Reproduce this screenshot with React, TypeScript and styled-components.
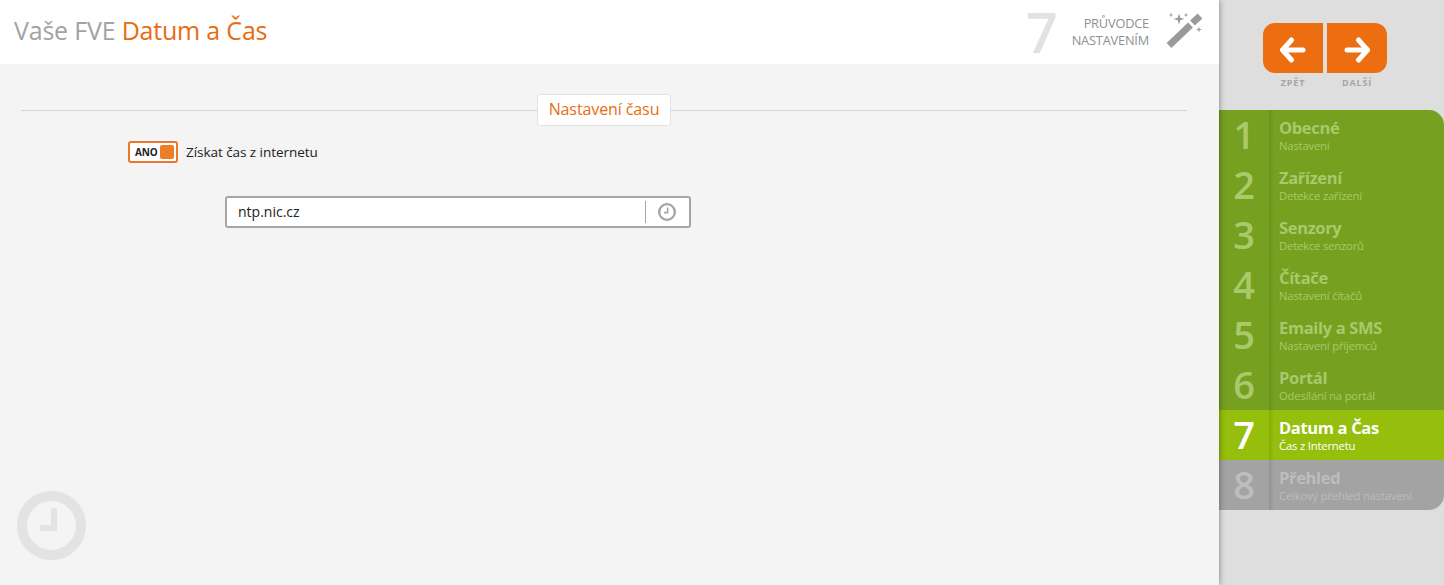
import styled, { createGlobalStyle } from "styled-components"

const GlobalStyle = createGlobalStyle`
  html, body {
    margin: 0;
    padding: 0;
    height: 100%;
    overflow: hidden;
    font-family: "Open Sans", "Noto Sans", sans-serif;
  }
  * {
    box-sizing: border-box;
  }
`

const Style = {
  Page: styled.div`
    display: flex;
    width: 1444px;
    height: 585px;
    background-color: #dedede;
  `,
  Main: styled.main`
    position: relative;
    width: 1219px;
    height: 100%;
    background-color: #f4f4f4;
    box-shadow: 0 0 6px rgba(0, 0, 0, 0.45);
  `,
  Header: styled.header`
    display: flex;
    align-items: center;
    justify-content: space-between;
    height: 64px;
    padding: 0 15px 5px 14px;
    background-color: #fff;
  `,
  Title: styled.h1`
    margin: 0;
    font-size: 25px;
    font-weight: 400;
    letter-spacing: -0.2px;
    color: #a3a3a3;
  `,
  TitleAccent: styled.span`
    color: #e96d10;
  `,
  Wizard: styled.div`
    display: flex;
    align-items: center;
  `,
  WizardNumber: styled.div`
    margin: 3px 14px 0 0;
    font-size: 56px;
    font-weight: 600;
    line-height: 64px;
    color: #e2e2e2;
  `,
  WizardText: styled.div`
    margin: 4px 17px 0 0;
    font-size: 12.8px;
    font-weight: 500;
    line-height: 17px;
    letter-spacing: -0.2px;
    text-align: right;
    text-transform: uppercase;
    color: #8f8f8f;
  `,
  Content: styled.div`
    padding: 30px 32px 0 21px;
  `,
  Legend: styled.div`
    display: flex;
    align-items: center;
    height: 32px;
    &::before,
    &::after {
      content: "";
      flex: 1;
      height: 1px;
      background-color: #d4d4d4;
    }
    &::before {
      flex: 0 0 516px;
    }
  `,
  LegendTag: styled.div`
    width: 134px;
    height: 32px;
    border: 1px solid #e3e3e3;
    border-radius: 3px;
    background-color: #fff;
    font-size: 16px;
    font-weight: 500;
    line-height: 29px;
    text-align: center;
    letter-spacing: -0.1px;
    color: #e96d10;
  `,
  SwitchRow: styled.div`
    display: flex;
    align-items: center;
    gap: 8px;
    margin: 15px 0 0 107px;
  `,
  Switch: styled.div`
    display: flex;
    align-items: center;
    justify-content: space-between;
    width: 50px;
    height: 22px;
    padding: 0 2px 0 5px;
    border: 2px solid #e9782a;
    border-radius: 3px;
    background-color: #fff;
  `,
  SwitchText: styled.span`
    font-size: 10px;
    font-weight: 700;
    letter-spacing: -0.2px;
    color: #222;
  `,
  SwitchKnob: styled.span`
    width: 14px;
    height: 14px;
    border-radius: 2px;
    background-color: #ee7d28;
  `,
  SwitchLabel: styled.span`
    font-size: 13.5px;
    letter-spacing: -0.05px;
    color: #222;
  `,
  InputBox: styled.div`
    display: flex;
    align-items: center;
    width: 466px;
    height: 32px;
    margin: 33px 0 0 204px;
    padding: 0 13px 1px 11px;
    border: 2px solid #a5a5a5;
    border-radius: 3px;
    background-color: #fff;
  `,
  InputText: styled.span`
    flex: 1;
    font-size: 14px;
    color: #222;
  `,
  InputAction: styled.div`
    display: flex;
    align-items: center;
    height: 22px;
    padding-left: 12px;
    border-left: 1px solid #a5a5a5;
  `,
  Watermark: styled.div`
    position: absolute;
    left: 17px;
    bottom: 25px;
    width: 69px;
    height: 69px;
  `,
  Sidebar: styled.aside`
    display: flex;
    flex-direction: column;
    width: 225px;
    height: 100%;
  `,
  NavButtons: styled.div`
    display: flex;
    gap: 4px;
    margin: 23px 0 0 44px;
  `,
  NavButton: styled.div<{ $side: "left" | "right" }>`
    display: flex;
    align-items: center;
    justify-content: center;
    width: 60px;
    height: 50px;
    padding-top: 3px;
    border-radius: ${(props) => (props.$side === "left" ? "12px 0 0 12px" : "0 12px 12px 0")};
    background-color: #ec6e10;
  `,
  NavLabels: styled.div`
    display: flex;
    gap: 4px;
    height: 37px;
    margin-left: 44px;
  `,
  NavLabel: styled.div`
    width: 60px;
    padding-top: 4px;
    font-size: 9px;
    font-weight: 700;
    letter-spacing: 0.8px;
    line-height: 12px;
    text-align: center;
    color: #a5a5a5;
  `,
  Steps: styled.div`
    display: flex;
    flex-direction: column;
  `,
  Step: styled.div<{ $state: "done" | "active" | "todo" }>`
    display: flex;
    height: 50px;
    background-color: ${(props) =>
      props.$state === "active" ? "#95bf0c" : props.$state === "done" ? "#76a020" : "#a3a3a3"};
    color: ${(props) =>
      props.$state === "active" ? "#fff" : props.$state === "done" ? "#a9c96b" : "#bdbdbd"};
    &:first-child {
      border-top-right-radius: 15px;
    }
    &:last-child {
      border-bottom-right-radius: 15px;
    }
  `,
  StepNumber: styled.div`
    width: 50px;
    font-size: 38px;
    font-weight: 600;
    line-height: 48px;
    text-align: center;
  `,
  StepText: styled.div`
    flex: 1;
    padding: 7px 0 0 10px;
    background: linear-gradient(to right, rgba(0, 0, 0, 0.1), rgba(0, 0, 0, 0) 5px);
  `,
  StepTitle: styled.div`
    font-size: 16.5px;
    font-weight: 700;
    letter-spacing: -0.35px;
    line-height: 22px;
  `,
  StepSubtitle: styled.div`
    font-size: 11.3px;
    letter-spacing: -0.2px;
    line-height: 14px;
  `,
}

type StepItem = {
  number: number
  title: string
  subtitle: string
  state: "done" | "active" | "todo"
}

const steps: StepItem[] = [
  { number: 1, title: "Obecné", subtitle: "Nastavení", state: "done" },
  { number: 2, title: "Zařízení", subtitle: "Detekce zařízení", state: "done" },
  { number: 3, title: "Senzory", subtitle: "Detekce senzorů", state: "done" },
  { number: 4, title: "Čítače", subtitle: "Nastavení čítačů", state: "done" },
  { number: 5, title: "Emaily a SMS", subtitle: "Nastavení příjemců", state: "done" },
  { number: 6, title: "Portál", subtitle: "Odesílání na portál", state: "done" },
  { number: 7, title: "Datum a Čas", subtitle: "Čas z Internetu", state: "active" },
  { number: 8, title: "Přehled", subtitle: "Celkový přehled nastavení", state: "todo" },
]

function WandIcon() {
  return (
    <svg width="38" height="38" viewBox="0 -1.5 38 38" fill="#9a9a9a">
      <path d="M3 33 L24.5 12.5 M26.5 10.5 L34 3.5" stroke="#9a9a9a" strokeWidth="7" fill="none" />
      <path d="M13 1 L14.3 5.2 L18.5 6.5 L14.3 7.8 L13 12 L11.7 7.8 L7.5 6.5 L11.7 5.2 Z" />
      <path d="M5 0 L5.6 1.9 L7.5 2.5 L5.6 3.1 L5 5 L4.4 3.1 L2.5 2.5 L4.4 1.9 Z" />
      <path d="M20 0 L20.6 1.9 L22.5 2.5 L20.6 3.1 L20 5 L19.4 3.1 L17.5 2.5 L19.4 1.9 Z" />
      <path d="M33 14 L33.7 16.3 L36 17 L33.7 17.7 L33 20 L32.3 17.7 L30 17 L32.3 16.3 Z" />
    </svg>
  )
}

function ClockIcon({ size, color, stroke }: { size: number; color: string; stroke: number }) {
  return (
    <svg width={size} height={size} viewBox="0 0 69 69" fill="none">
      <circle cx="34.5" cy="34.5" r={34.5 - stroke / 2} stroke={color} strokeWidth={stroke} />
      <path d="M34 17 H40 V40 H23 V34 H34 Z" fill={color} />
    </svg>
  )
}

function ArrowIcon({ direction }: { direction: "left" | "right" }) {
  return (
    <svg width="26" height="26" viewBox="0 0 26 26" fill="none">
      <path
        d={direction === "left" ? "M11.5 3 L2.5 13 L11.5 23 M4 13 H23" : "M14.5 3 L23.5 13 L14.5 23 M22 13 H3"}
        stroke="#fff"
        strokeWidth="5"
        strokeLinecap="round"
        strokeLinejoin="round"
      />
    </svg>
  )
}

export default function App() {
  return (
    <>
      <GlobalStyle />
      <Style.Page>
        <Style.Main>
          <Style.Header>
            <Style.Title>
              Vaše FVE <Style.TitleAccent>Datum a Čas</Style.TitleAccent>
            </Style.Title>
            <Style.Wizard>
              <Style.WizardNumber>7</Style.WizardNumber>
              <Style.WizardText>
                Průvodce
                <br />
                Nastavením
              </Style.WizardText>
              <WandIcon />
            </Style.Wizard>
          </Style.Header>
          <Style.Content>
            <Style.Legend>
              <Style.LegendTag>Nastavení času</Style.LegendTag>
            </Style.Legend>
            <Style.SwitchRow>
              <Style.Switch>
                <Style.SwitchText>ANO</Style.SwitchText>
                <Style.SwitchKnob />
              </Style.Switch>
              <Style.SwitchLabel>Získat čas z internetu</Style.SwitchLabel>
            </Style.SwitchRow>
            <Style.InputBox>
              <Style.InputText>ntp.nic.cz</Style.InputText>
              <Style.InputAction>
                <ClockIcon size={18} color="#a5a5a5" stroke={9} />
              </Style.InputAction>
            </Style.InputBox>
          </Style.Content>
          <Style.Watermark>
            <ClockIcon size={69} color="#e3e3e3" stroke={10} />
          </Style.Watermark>
        </Style.Main>
        <Style.Sidebar>
          <Style.NavButtons>
            <Style.NavButton $side="left">
              <ArrowIcon direction="left" />
            </Style.NavButton>
            <Style.NavButton $side="right">
              <ArrowIcon direction="right" />
            </Style.NavButton>
          </Style.NavButtons>
          <Style.NavLabels>
            <Style.NavLabel>ZPĚT</Style.NavLabel>
            <Style.NavLabel>DALŠÍ</Style.NavLabel>
          </Style.NavLabels>
          <Style.Steps>
            {steps.map((step) => (
              <Style.Step key={step.number} $state={step.state}>
                <Style.StepNumber>{step.number}</Style.StepNumber>
                <Style.StepText>
                  <Style.StepTitle>{step.title}</Style.StepTitle>
                  <Style.StepSubtitle>{step.subtitle}</Style.StepSubtitle>
                </Style.StepText>
              </Style.Step>
            ))}
          </Style.Steps>
        </Style.Sidebar>
      </Style.Page>
    </>
  )
}
